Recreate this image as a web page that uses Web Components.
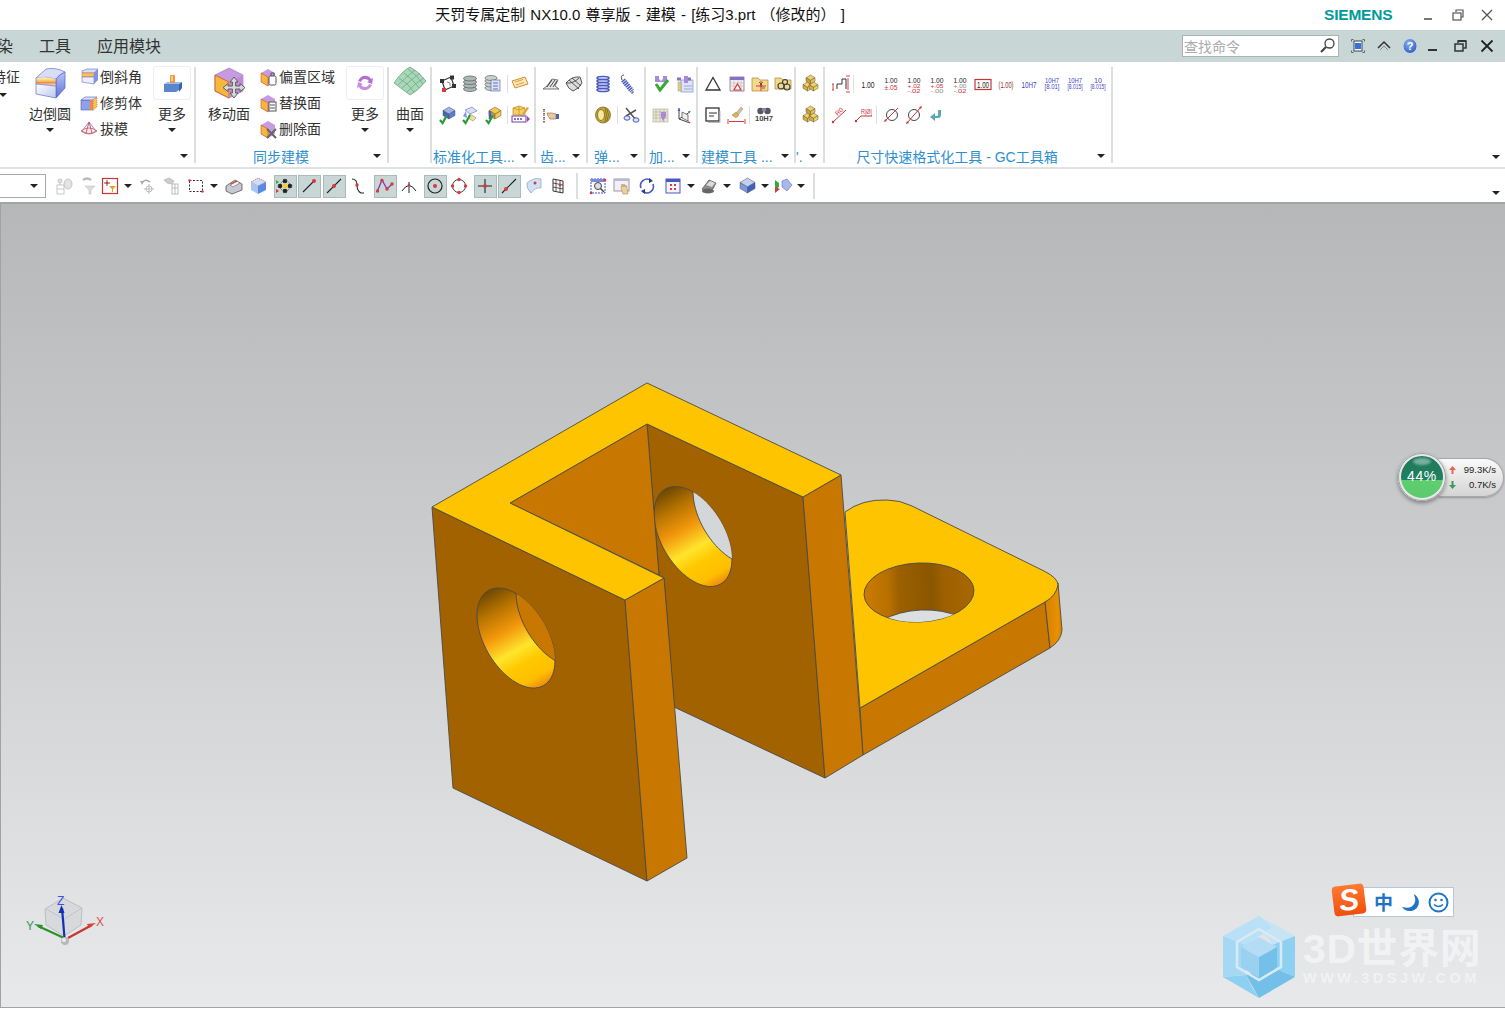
<!DOCTYPE html>
<html lang="zh">
<head>
<meta charset="utf-8">
<title>NX10.0</title>
<style>
  html,body{margin:0;padding:0;background:#fff;overflow:hidden}
  body{width:1505px;height:1010px;font-family:"Liberation Sans","Noto Sans CJK SC",sans-serif;color:#333}
</style>
</head>
<body>
<nx-titlebar>天罚专属定制 NX10.0 尊享版 - 建模 - [练习3.prt （修改的） ]</nx-titlebar>
<nx-menubar></nx-menubar>
<nx-ribbon>
  <nx-group w="196" label="" caret="184">
    <nx-clip-col></nx-clip-col>
    <nx-big icon="fillet" w="44" label="边倒圆" caret ml="8"></nx-big>
    <nx-list ml="8" w="64">
      <nx-small icon="chamfer">倒斜角</nx-small>
      <nx-small icon="trim">修剪体</nx-small>
      <nx-small icon="draft">拔模</nx-small>
    </nx-list>
    <nx-more icon="morebox" ml="9"></nx-more>
  </nx-group>
  <nx-group w="193" label="同步建模" center="85" caret="181">
    <nx-big icon="movef" w="44" label="移动面" ml="11"></nx-big>
    <nx-list ml="8" w="78">
      <nx-small icon="offs">偏置区域</nx-small>
      <nx-small icon="repl">替换面</nx-small>
      <nx-small icon="delf">删除面</nx-small>
    </nx-list>
    <nx-more icon="refresh" ml="9"></nx-more>
  </nx-group>
  <nx-group w="43" caret="">
    <nx-big icon="surf" w="36" label="曲面" caret ml="3"></nx-big>
  </nx-group>
  <nx-group w="104" label="标准化工具..." left="1" caret="92">
    <nx-icons start="432" r1="a_reg@447 a_stack@470 a_sheet@493 |@508 a_tag@521" r2="a_ok1@447 a_ok2@470 a_ok3@493 |@508 a_edit@521"></nx-icons>
  </nx-group>
  <nx-group w="52" label="齿..." left="4" caret="40">
    <nx-icons start="536" r1="b_gear1@551 b_gear2@574" r2="b_hand@551"></nx-icons>
  </nx-group>
  <nx-group w="58" label="弹..." left="6" caret="46">
    <nx-icons start="588" r1="c_spr@603 c_spr2@627" r2="c_coil@603 |@618 c_scis@632"></nx-icons>
  </nx-group>
  <nx-group w="52" label="加..." left="3" caret="40">
    <nx-icons start="646" r1="d_chk@661 d_grid@684" r2="d_tbl@661 d_axis@684"></nx-icons>
  </nx-group>
  <nx-group w="98" label="建模工具 ..." left="3" caret="87">
    <nx-icons start="698" r1="e_tri@713 e_cal@737 e_fold@760 e_fold2@783" r2="e_note@713 e_brush@737 |@750 e_fit@765"></nx-icons>
  </nx-group>
  <nx-group w="29" label="'." left="0" caret="17">
    <nx-icons start="796" r1="f_box@810" r2="f_box@810"></nx-icons>
  </nx-group>
  <nx-group w="288" label="尺寸快速格式化工具 - GC工具箱" center="132" caret="276">
    <nx-icons start="825" r1="g_step@841 |@854 g_d1@869 g_d2@892 g_d3@915 g_d4@938 g_d5@961 g_d6@984 g_d7@1007 g_h1@1030 g_h2@1053 g_h3@1076 g_h4@1099" r2="g_a@840 g_b@864 |@877 g_c@893 g_e@915 g_back@938"></nx-icons>
  </nx-group>
</nx-ribbon>
<nx-toolbar></nx-toolbar>
<nx-viewport>
  <nx-speed></nx-speed>
  <nx-watermark></nx-watermark>
  <nx-ime></nx-ime>
</nx-viewport>

<script>
// ---- small helpers
const FONT = '"Liberation Sans","Noto Sans CJK SC",sans-serif';
const caretCss = (c = "#222") => `width:0;height:0;border-left:4px solid transparent;border-right:4px solid transparent;border-top:4px solid ${c}`;
const cube = (x, y, s, top, left, right) => `<path d="M${x} ${y+s*.3}L${x+s*.5} ${y}L${x+s} ${y+s*.3}L${x+s*.5} ${y+s*.6}Z" fill="${top}" stroke="#555" stroke-width=".5"/><path d="M${x} ${y+s*.3}L${x+s*.5} ${y+s*.6}V${y+s}L${x} ${y+s*.7}Z" fill="${left}" stroke="#555" stroke-width=".5"/><path d="M${x+s} ${y+s*.3}L${x+s*.5} ${y+s*.6}V${y+s}L${x+s} ${y+s*.7}Z" fill="${right}" stroke="#555" stroke-width=".5"/>`;
const check = (x, y) => `<path d="M${x} ${y}l2.6 3L${x+7} ${y-5}" fill="none" stroke="#2c9a38" stroke-width="2.2"/>`;
const dim = (lines, col = "#222") => lines.map(([t, y, len, s, c]) => `<text x="10" y="${y}" text-anchor="middle" font-family="Liberation Sans" font-size="${s || 8}" textLength="${len}" lengthAdjust="spacingAndGlyphs" fill="${c || col}">${t}</text>`).join("");
const RED = "#c8333a", BLU = "#3f3fc8";

const ICONS = {
  // big buttons (32 box)
  fillet: `<defs><linearGradient id="f1" x1="0" y1="0" x2="0" y2="1"><stop offset="0" stop-color="#fff6c8"/><stop offset=".45" stop-color="#f5c35a"/><stop offset=".62" stop-color="#f08a4a"/><stop offset="1" stop-color="#fbf4dc"/></linearGradient><linearGradient id="f2" x1="0" y1="0" x2="1" y2="1"><stop offset="0" stop-color="#fff"/><stop offset="1" stop-color="#bcc8ea"/></linearGradient><linearGradient id="f3" x1="0" y1="0" x2="0" y2="1"><stop offset="0" stop-color="#b8c4f4"/><stop offset="1" stop-color="#5f70dc"/></linearGradient></defs><path d="M22 12Q26 7 31 5V21L22 31Z" fill="url(#f3)" stroke="#5060b8" stroke-width=".7"/><path d="M2 11L12 2Q22 0 31 5Q25 7 22 12Q12 9 2 11Z" fill="#d8def8" stroke="#6070c8" stroke-width=".7"/><path d="M2 11Q12 9 22 12V19L2 17Z" fill="url(#f1)"/><path d="M2 17L22 19V31L2 27Z" fill="url(#f2)" stroke="#6070c8" stroke-width=".7"/><path d="M2 11V17M22 12V19" stroke="#6070c8" stroke-width=".7"/>`,
  movef: `<path d="M16 1L30 8V24L16 31L2 24V8Z" fill="#c79be0" stroke="#8f6fb0" stroke-width=".6"/><path d="M2 8L16 15V31L2 24Z" fill="#f5b73c" stroke="#c9502c" stroke-width=".8"/><path d="M16 15L30 8V24L16 31Z" fill="#c08ad8"/><path d="M21 9l4 5h-2.4v4H27v-2.4l5 4-5 4V21h-4.400v4H25l-4 5-4-5h2.400V21H15v2.600l-5-4 5-4V18h4.400v-4H17Z" transform="translate(0 1)" fill="#d8d8d8" stroke="#555" stroke-width=".9"/>`,
  surf: `<path d="M2 18Q10 6 18 2Q26 6 34 16Q26 26 18 30Q10 24 2 18Z" fill="#a9d8b8" stroke="#5c9a78" stroke-width=".7"/><path d="M7 13Q16 18 22 27M12 8Q21 14 27 23M16 4Q25 10 31 19M6 20Q14 12 23 5M10 23Q19 15 28 8M15 27Q23 18 32 13" fill="none" stroke="#5c9a78" stroke-width=".6"/>`,
  morebox: `<path d="M3 12h15v6l-3 2H3Z" fill="#5b86cc"/><path d="M3 12l3-2h15l-3 2Z" fill="#9cc0ee"/><path d="M18 12l3-2v6l-3 4Z" fill="#3c64a8"/><rect x="9" y="3" width="5" height="8" rx="1" fill="#f5963a"/><rect x="10" y="4" width="2" height="5" fill="#ffd28a"/>`,
  refresh: `<path d="M4 9Q7 3 13 4Q16 4.500 17 7l2-1-1 6-5-2 2-1Q13 6.500 10 7Q7.500 7.500 7 10Z" fill="#b36fd0"/><path d="M18 13Q15 19 9 18Q6 17.500 5 15l-2 1 1-6 5 2-2 1Q9 15.500 12 15Q14.500 14.500 15 12Z" fill="#c98ce0"/>`,
  // small with label
  chamfer: `<path d="M2 3L7 1H18L14 5H2Z" fill="#d8def8" stroke="#6070c8" stroke-width=".6"/><path d="M2 5H14V9H2Z" fill="#f5c35a" stroke="#e07a40" stroke-width=".6"/><path d="M2 9H14V16L2 14Z" fill="#eef" stroke="#6070c8" stroke-width=".6"/><path d="M14 5L18 1V12L14 16Z" fill="#7f92e4"/>`,
  trim: `<rect x="1" y="6" width="12" height="10" fill="#8fa2e8" stroke="#5060b8" stroke-width=".6"/><path d="M1 6L5 3H17L13 6Z" fill="#d8def8" stroke="#5060b8" stroke-width=".6"/><path d="M10 6H13V16H10Z" fill="#f08a4a"/><path d="M13 6L17 3V13L13 16Z" fill="#f5c35a" stroke="#c9502c" stroke-width=".5" stroke-dasharray="1 1"/>`,
  draft: `<path d="M9 2L2 11Q9 16 16 11Z" fill="#f3f0fa" stroke="#6070c8" stroke-width=".7"/><path d="M9 2L6 13M9 2L12 13" stroke="#d83a3a" stroke-width=".8" fill="none"/><path d="M1 11Q9 5 17 11Q9 17 1 11Z" fill="none" stroke="#d8504a" stroke-width=".8"/>`,
  offs: `<path d="M9 1L16 5V14L9 18L2 14V5Z" fill="#c79be0"/><path d="M2 5L9 9V18L2 14Z" fill="#f5b73c" stroke="#c9502c" stroke-width=".6"/><rect x="10" y="8" width="7" height="9" rx="1.500" fill="#fff" stroke="#555"/><path d="M12 8V5h3v3" fill="none" stroke="#555"/>`,
  repl: `<path d="M9 1L16 5V14L9 18L2 14V5Z" fill="#c79be0"/><path d="M2 5L9 9V18L2 14Z" fill="#f5b73c" stroke="#c9502c" stroke-width=".6"/><rect x="10" y="8" width="7" height="9" fill="#fff" stroke="#555"/><path d="M11 11h5M11 14h5" stroke="#555"/>`,
  delf: `<path d="M9 1L16 5V14L9 18L2 14V5Z" fill="#c79be0"/><path d="M2 5L9 9V18L2 14Z" fill="#f5b73c" stroke="#c9502c" stroke-width=".6"/><path d="M8 9L17 18M17 9L8 18" stroke="#666" stroke-width="2"/>`,
  // group 4
  a_reg: `<path d="M5 7L14 3L17 12L8 16Z" fill="#fff" stroke="#333" stroke-width="1.200"/><g fill="#333"><rect x="3" y="5" width="4" height="4"/><rect x="13" y="1.500" width="4" height="4"/><rect x="15" y="10" width="4" height="4"/></g><rect x="5" y="14" width="4" height="4" fill="#d83a3a"/><path d="M10 8l3 1v3" fill="none" stroke="#888"/>`,
  a_stack: `<g fill="#aab8b0" stroke="#556" stroke-width=".7"><ellipse cx="10" cy="15" rx="6.500" ry="2.500"/><ellipse cx="10" cy="11.500" rx="6.500" ry="2.500"/><ellipse cx="10" cy="8" rx="6.500" ry="2.500"/><ellipse cx="10" cy="4.500" rx="6.500" ry="2.500"/></g>`,
  a_sheet: `<g fill="#c8d0c8" stroke="#667" stroke-width=".7"><ellipse cx="8" cy="14" rx="6" ry="2.500"/><ellipse cx="8" cy="10.500" rx="6" ry="2.500"/><ellipse cx="8" cy="7" rx="6" ry="2.500"/><ellipse cx="8" cy="4" rx="6" ry="2.500"/></g><rect x="8" y="6" width="9" height="11" fill="#dde4f8" stroke="#6070b0" stroke-width=".7"/><path d="M10 9h5M10 12h5M10 15h5" stroke="#6070b0"/>`,
  a_tag: `<path d="M2 7L15 3L18 10L5 14Z" fill="#fce8b0" stroke="#d88a30"/><path d="M5 8l8-2.500M6 11l8-2.500" stroke="#d88a30" stroke-width=".8"/>`,
  a_ok1: cube(6, 2, 12, "#9fb4ee", "#3f62c8", "#5b7de0") + check(3, 15),
  a_ok2: `<path d="M5 5l7-3 5 4-7 3Z" fill="#d8def8" stroke="#6070b8" stroke-width=".6"/><path d="M10 9l6 4-3 3-5-3Z" fill="#f0e090" stroke="#888" stroke-width=".6"/><path d="M6 6l-3 5 4 2Z" fill="#8898e0"/>` + check(3, 15),
  a_ok3: cube(6, 2, 12, "#f5c84a", "#e0a020", "#f5c84a") + `<path d="M7 6v8" stroke="#3f62c8" stroke-width="2.500"/>` + check(3, 15),
  a_edit: `<path d="M3 3l6-2 6 2v7H3Z" fill="#f5d060" stroke="#b88a20" stroke-width=".7"/><path d="M9 1v9M3 3l6 2 6-2" stroke="#b88a20" stroke-width=".6" fill="none"/><rect x="2" y="11" width="14" height="6" fill="#fff" stroke="#6a3fa8"/><path d="M4 14h2M7 14h2M10 14h2" stroke="#6a3fa8" stroke-width="1.500"/><path d="M17 11l3 3-3 3Z" fill="#a83fc8"/><path d="M12 9l5-7 2 1-5 7Z" fill="#e8a040"/>`,
  // group 5
  b_gear1: `<path d="M2 15l4-3 5-7 6 1-3 6 4 3Z" fill="#e8e8e8" stroke="#555" stroke-width=".8"/><path d="M6 13l5-7M9 13l5-7M12 13l4-6" stroke="#333" stroke-width=".9"/>`,
  b_gear2: `<path d="M2 9Q8 2 16 3L18 9Q15 15 9 17Q4 15 2 9Z" fill="#ddd" stroke="#333" stroke-width=".8"/><path d="M5 6l10 9M8 4l9 8M2 9q7 1 13-5" fill="none" stroke="#333" stroke-width=".8"/>`,
  b_hand: `<path d="M2 5h2M2 9h2M2 13h2M2 17h2" stroke="#c8333a" stroke-width="1.200"/><path d="M3 4v14" stroke="#333" stroke-dasharray="1 1"/><path d="M6 8h5l4 1v5H9l-2-3Z" fill="#e8c8a0" stroke="#8a6a40" stroke-width=".6"/><rect x="15" y="9" width="3" height="5" fill="#5060b8"/>`,
  // group 6
  c_spr: `<g fill="none" stroke="#4a58c0" stroke-width="1.700"><ellipse cx="10" cy="4" rx="6" ry="1.500"/><ellipse cx="10" cy="7" rx="6" ry="1.500"/><ellipse cx="10" cy="10" rx="6" ry="1.500"/><ellipse cx="10" cy="13" rx="6" ry="1.500"/><ellipse cx="10" cy="16" rx="6" ry="1.500"/></g>`,
  c_spr2: `<path d="M6 6L15 17" stroke="#4a58c0" stroke-width="5" stroke-dasharray="1.500 .7"/><path d="M5 6Q3 1 7 1M16 17Q17 20 14 19" fill="none" stroke="#555"/>`,
  c_coil: `<ellipse cx="10" cy="10" rx="7.500" ry="8" fill="#c8a830" stroke="#6a5a20" stroke-width=".7"/><ellipse cx="8" cy="10" rx="3.500" ry="5.500" fill="#f5e8a0" stroke="#6a5a20" stroke-width=".7"/><path d="M12 3Q15 10 12 17M14 4Q17 10 14 16" fill="none" stroke="#6a5a20" stroke-width=".7"/>`,
  c_scis: `<path d="M5 3L15 15M15 5L5 11" stroke="#555" stroke-width="1.500"/><ellipse cx="15" cy="15" rx="3" ry="2.200" fill="#dde4f8" stroke="#4a58c0"/><ellipse cx="6" cy="13" rx="3" ry="2.200" fill="#dde4f8" stroke="#4a58c0"/>`,
  // group 7
  d_chk: `<path d="M4 2h4v3l2 2 2-2V2h4v6h-12Z" fill="#a88ad8"/><path d="M5 10l4 6 8-10" fill="none" stroke="#36a838" stroke-width="3"/>`,
  d_grid: `<rect x="7" y="6" width="12" height="12" fill="#dde4f8" stroke="#8090c8" stroke-width=".7"/><path d="M3 5h4M13 5h4" stroke="#8a6fc8" stroke-width="3"/><rect x="4" y="8" width="3" height="9" fill="#e8d070" stroke="#998" stroke-width=".5"/><path d="M10 2v7h4V2" fill="#a88ad8"/><path d="M10 12h8M10 15h8" stroke="#8090c8" stroke-width=".7"/>`,
  d_tbl: `<rect x="2" y="4" width="15" height="13" fill="#f0e8c8" stroke="#aaa" stroke-width=".6"/><path d="M2 7h15M2 10h15M2 13h15M5 4v13M9 4v13M13 4v13" stroke="#aaa" stroke-width=".6"/><path d="M10 7h5v5l-2 2-1 3-1-3-1-2Z" fill="#a88ad8"/>`,
  d_axis: `<path d="M5 3v11l11 4M5 14l11-7" fill="none" stroke="#444"/><path d="M8 7l6 3v6l-6-3Z" fill="#eee" stroke="#444" stroke-width=".7"/><path d="M5 3l-1.500 3h3Z" fill="#3f62c8"/><path d="M17 6l-3 0 1 2Z" fill="#36a838"/><path d="M17 18l-3-2 0 2Z" fill="#d83a3a"/>`,
  // group 8
  e_tri: `<path d="M10 3.500L17 16H3Z" fill="#fff" stroke="#333" stroke-width="1.300"/>`,
  e_cal: `<rect x="3" y="3" width="14" height="14" fill="#f4eef4" stroke="#666" stroke-width=".7"/><rect x="3" y="3" width="14" height="3" fill="#8a6fc8"/><path d="M3 9h14M3 12h14M7 6v11M11 6v11M14 6v11" stroke="#bbb" stroke-width=".6"/><path d="M10.500 10l3.500 6H7Z" fill="#fff" stroke="#d83a3a" stroke-width="1.200"/>`,
  e_fold: `<path d="M2 4h6l2 2h8v11H2Z" fill="#f2d98c" stroke="#a8883a" stroke-width=".7"/><path d="M11 7v10M6 12h10" stroke="#d83a3a" stroke-width="1"/><path d="M9 8l3 3M13 8l-3 3M15 14h-3" stroke="#333" stroke-width=".7"/><circle cx="11" cy="12" r="1.300" fill="#d83a3a"/>`,
  e_fold2: `<path d="M2 4h6l2 2h8v9H2Z" fill="#f2d98c" stroke="#a8883a" stroke-width=".7"/><circle cx="8" cy="12" r="3" fill="none" stroke="#444" stroke-width="1.200"/><circle cx="14" cy="13" r="3" fill="none" stroke="#444" stroke-width="1.200"/><circle cx="12" cy="8" r="2.500" fill="none" stroke="#444" stroke-width="1.200"/>`,
  e_note: `<rect x="3" y="3" width="13" height="13" fill="#fff" stroke="#333" stroke-width="1.300"/><path d="M6 8h8M6 11h5" stroke="#333"/><path d="M5 17.500h12V6" fill="none" stroke="#bbb"/>`,
  e_brush: `<path d="M9 8l5-6 2 2-5 6Z" fill="#d8c090" stroke="#888" stroke-width=".5"/><path d="M5 10l4-3 3 3-3 3Z" fill="#e0b050" stroke="#888" stroke-width=".5"/><path d="M1 14v5M18 14v5M2 16.500h15" stroke="#d83a3a"/>`,
  e_fit: `<circle cx="6.500" cy="6" r="3.200" fill="#556" /><circle cx="13.500" cy="6" r="3.200" fill="#556"/><rect x="8" y="3" width="4" height="3" fill="#889"/><text x="10" y="16" text-anchor="middle" font-family="Liberation Sans" font-weight="700" font-size="7.500" fill="#444">10H7</text>`,
  f_box: cube(3, 8, 9, "#f5d060", "#e0b030", "#f5d060") + cube(9, 8, 9, "#f5d060", "#e0b030", "#f5d060") + cube(6, 1, 9, "#f5d060", "#d0a030", "#e8c050"),
  // group 10
  g_step: `<path d="M6 15V10h5V5h4v10" fill="none" stroke="#333"/><path d="M2 10v6M17 4v12M15 2h4M15 18h4M1 10h2M1 16h2" stroke="${RED}" stroke-width=".9" fill="none"/>`,
  g_d1: dim([["1.00", 13.500, 13, 9]]),
  g_d2: dim([["1.00", 9, 13], ["±.05", 15.500, 13, 6.500, RED]]),
  g_d3: dim([["1.00", 9, 13], ["+.02", 14, 13, 6, RED], ["-.02", 18.500, 13, 6, RED]]),
  g_d4: dim([["1.00", 9, 13], ["+.05", 14, 13, 6, RED], ["-.00", 18.500, 13, 6, "#888"]]),
  g_d5: dim([["1.00", 9, 13], ["+.00", 14, 13, 6, "#888"], ["-.02", 18.500, 13, 6, RED]]),
  g_d6: `<rect x="2" y="5.500" width="16" height="10" fill="none" stroke="${RED}" stroke-width="1.200"/>` + dim([["1.00", 13.500, 12, 9]]),
  g_d7: dim([["(1.00)", 13.500, 15, 8.500, "#903030"]]),
  g_h1: dim([["10H7", 13.500, 15, 8.500, BLU]]),
  g_h2: dim([["10H7", 8.500, 14, 8, BLU], ["[8.01]", 15, 15, 7, BLU]]),
  g_h3: dim([["10H7", 8.500, 14, 8, BLU], ["[8.015]", 15, 15, 7, BLU]]),
  g_h4: dim([["10", 8.500, 8, 8, BLU], ["[8.015]", 15, 15, 7, BLU]]),
  g_a: `<path d="M3 17L16 5" stroke="${RED}"/><circle cx="3" cy="17" r="1.200" fill="${RED}"/><text x="8" y="10" font-family="Liberation Sans" font-size="6.500" fill="${RED}" transform="rotate(-42 9 11)">R0</text>`,
  g_b: `<path d="M2 16L7 11H18" fill="none" stroke="${RED}"/><circle cx="2" cy="16" r="1.200" fill="${RED}"/>` + `<text x="7" y="9" font-family="Liberation Sans" font-size="6.500" textLength="11" lengthAdjust="spacingAndGlyphs" fill="${RED}">R|Ø|</text>`,
  g_c: `<circle cx="10" cy="10" r="5.500" fill="none" stroke="#444" stroke-width="1"/><path d="M3 16L16 3" stroke="${RED}"/><path d="M2 17l3-1-2-2Z" fill="${RED}"/>`,
  g_e: `<circle cx="10" cy="10" r="5.500" fill="none" stroke="#444" stroke-width="1"/><path d="M3 18L17 2" stroke="${RED}"/><path d="M2 19l3-1-2-2Z" fill="${RED}"/><path d="M18 1l-1 3-2-2Z" fill="${RED}"/>`,
  g_back: `<path d="M14 5v5q0 3-3 3H8v3L3 12l5-4v3h2q1 0 1-1V5Z" fill="#5aa8b0"/>`,
  // toolbar
  t_part: `<g stroke="#bbb" fill="#e4e4e4" stroke-width=".8"><rect x="3" y="9" width="7" height="9" fill="none"/><path d="M3 13h7M6 9V5"/><ellipse cx="14" cy="8" rx="4" ry="5"/><circle cx="6" cy="5" r="2"/></g>`,
  t_sel: `<path d="M5 4q4-3 8 0" stroke="#bbb" stroke-width="2.500" fill="none"/><path d="M7 10h10l-4 4v4h-2v-4Z" fill="#ddd" stroke="#bbb" stroke-width=".5"/>`,
  t_filt: `<rect x="2.500" y="2.500" width="15" height="15" fill="#fff" stroke="#c8333a" stroke-width="1.200"/><path d="M7 4v6M4 7h6" stroke="#333" stroke-width=".8"/><circle cx="7" cy="7" r="1.300" fill="#d83a3a"/><path d="M9 10h7l-3 3v3h-1v-3Z" fill="#e8a020"/>`,
  t_rot: `<path d="M5 7q3-5 8-1" fill="none" stroke="#aaa" stroke-width="1.500"/><path d="M3 5l4 0-2 4Z" fill="#aaa"/><circle cx="12" cy="13" r="3" fill="none" stroke="#bbb"/><path d="M12 8v10M7 13h10" stroke="#bbb"/>`,
  t_ass: `<path d="M3 4l5-2 5 3-2 3-5-1Z" fill="#ccc" stroke="#aaa" stroke-width=".6"/><rect x="11" y="8" width="6" height="10" fill="none" stroke="#bbb"/><path d="M11 12h6M14 8v10" stroke="#bbb"/>`,
  t_rect: `<rect x="3.500" y="4.500" width="13" height="11" fill="none" stroke="#333" stroke-dasharray="2 1.500"/><circle cx="3.500" cy="4.500" r="1.200" fill="#d83a3a"/><circle cx="16.500" cy="15.500" r="1.200" fill="#d83a3a"/>`,
  t_shade: `<path d="M2 10L11 4L18 8V14L8 18L2 15Z" fill="#c8c8d0" stroke="#555" stroke-width=".8"/><path d="M6 9l7-4 3 2-7 4Z" fill="#f0f0f0" stroke="#555" stroke-width=".5"/><path d="M7 8l6-3" stroke="#d83a3a" stroke-width="1.200"/>`,
  t_cube: `<path d="M3 6L10 2L18 6L10 10Z" fill="#c8e0f8" stroke="#d85050" stroke-width=".7" stroke-dasharray="1.500 .8"/><path d="M3 6L10 10V18L3 14Z" fill="#a8c4f0"/><path d="M18 6L10 10V18L18 14Z" fill="#5a8ae0"/>`,
  t_pts: `<g fill="#222"><circle cx="5" cy="10" r="2.300"/><circle cx="15" cy="10" r="2.300"/><circle cx="10" cy="5" r="2.300"/><circle cx="10" cy="15" r="2.300"/></g><path d="M10 3L17 10L10 17L3 10Z" fill="none" stroke="#555" stroke-dasharray="1 1"/><circle cx="10" cy="10" r="2.500" fill="#f5d020"/><path d="M1 4l3 2-3 2Z" fill="#36a838"/><path d="M1 13l3 2-3 2Z" fill="#d83a3a"/>`,
  t_end: `<path d="M4 16L15 5" stroke="#222" stroke-width="1.100"/><circle cx="15" cy="5" r="2" fill="#d83a3a"/>`,
  t_mid: `<path d="M3 17L17 3" stroke="#222" stroke-width="1.100"/><circle cx="10" cy="10" r="2" fill="#d83a3a"/>`,
  t_curve: `<path d="M4 3q5 0 5 6t4 8h3" fill="none" stroke="#222" stroke-width="1.100"/><circle cx="9" cy="9" r="1.700" fill="#d83a3a"/>`,
  t_poly: `<path d="M2 16L7 4L12 13L17 8" fill="none" stroke="#8a2fb8" stroke-width="1.300"/><g fill="#d83a3a"><circle cx="2.500" cy="15" r="1.700"/><circle cx="7" cy="4.500" r="1.700"/><circle cx="12" cy="13" r="1.700"/><circle cx="17" cy="8" r="1.700"/></g>`,
  t_arc: `<path d="M3 15q7-11 14 0M10 6v11" fill="none" stroke="#222" stroke-width="1"/><circle cx="10" cy="9" r="1.300" fill="#d83a3a"/>`,
  t_ctr: `<circle cx="10" cy="10" r="7" fill="none" stroke="#222" stroke-width="1.200"/><circle cx="10" cy="10" r="2" fill="#d83a3a"/>`,
  t_circ: `<circle cx="10" cy="10" r="6.500" fill="none" stroke="#333"/><g fill="#d83a3a"><circle cx="10" cy="3.500" r="1.700"/><circle cx="10" cy="16.500" r="1.700"/><circle cx="3.500" cy="10" r="1.700"/><circle cx="16.500" cy="10" r="1.700"/></g>`,
  t_cross: `<path d="M3 10h14M10 3v14" stroke="#222" stroke-width="1.100"/><circle cx="10" cy="10" r="1.900" fill="#d83a3a"/>`,
  t_line: `<path d="M3 17L17 3" stroke="#222" stroke-width="1.100"/><circle cx="7" cy="13" r="2" fill="#d83a3a"/>`,
  t_surf: `<path d="M3 7Q10 1 17 3V12Q11 11 7 17Q2 12 3 7Z" fill="#cfe2f5" stroke="#9ab" stroke-width=".8"/><circle cx="11" cy="7" r="1.500" fill="#d83a3a"/>`,
  t_mesh: `<path d="M5 3L15 5V17L5 15Z" fill="#fff" stroke="#333"/><path d="M5 7l10 2M5 11l10 2M8 3.500v12M12 4.500v12" stroke="#333" stroke-width=".8"/><circle cx="12" cy="9" r="1.400" fill="#d83a3a"/>`,
  t_fit: `<rect x="3" y="3" width="14" height="14" fill="#fff" stroke="#3f4fb8" stroke-dasharray="2 1"/><rect x="3" y="3" width="14" height="3" fill="#7a8ad8"/><circle cx="10" cy="10" r="3.500" fill="#dde" stroke="#444"/><path d="M12.500 12.500L16 16" stroke="#444" stroke-width="1.500"/><circle cx="3" cy="17" r="1.300" fill="#d83a3a"/><circle cx="17" cy="4" r="1.300" fill="#d83a3a"/>`,
  t_pan: `<rect x="2" y="3" width="15" height="12" fill="#f0f0f8" stroke="#999"/><rect x="2" y="3" width="15" height="2" fill="#b8b8d8"/><path d="M9 12l1-4 1 3 1-3 1 3 1-2 1 3 1 6h-5Z" fill="#f0d0a0" stroke="#a07840" stroke-width=".5"/>`,
  t_rotv: `<path d="M4 12A6.500 6.500 0 0 1 14 4.500" fill="none" stroke="#4a58c0" stroke-width="1.600"/><path d="M16 8A6.500 6.500 0 0 1 6 15.500" fill="none" stroke="#4a58c0" stroke-width="1.600"/><path d="M12 2l4 3-4 2Z" fill="#2c3890"/><path d="M8 18l-4-3 4-2Z" fill="#2c3890"/>`,
  t_view: `<rect x="3" y="3" width="14" height="14" fill="#f4f4fc" stroke="#4a58c0"/><rect x="3" y="3" width="14" height="3" fill="#4a58c0"/><path d="M7 8h2v2H7ZM11 8h2v2h-2ZM7 12h2v2H7ZM11 12h2v2h-2Z" fill="#d83a3a"/>`,
  t_render: `<path d="M2 13l7-9 7 3-3 6-6 3Z" fill="#8a8f8f" stroke="#555" stroke-width=".7"/><path d="M6 9l4-4 5 2-3 4Z" fill="#d8dcdc"/><ellipse cx="8" cy="15" rx="6" ry="2.500" fill="#666"/>`,
  t_cube2: cube(3, 2, 15, "#c0d0f0", "#7a9ae0", "#3f62c0"),
  t_diam: `<path d="M9 5l5-2 5 6-5 6-5-4Z" fill="#a8b8e8" stroke="#6070b8" stroke-width=".6"/><path d="M2 4l4 3v4l-4 3Z" fill="#36a838"/><path d="M2 11l5 2-5 4Z" fill="#d83a3a"/>`,
  // title and menu
  find: `<circle cx="11.500" cy="7.500" r="4.500" fill="#fff" stroke="#444" stroke-width="1.300"/><path d="M8 11L3 16" stroke="#444" stroke-width="2.200"/>`,
  frame: `<path d="M3.500 5.500V3.500h2M14.500 3.500h2v2M16.500 14.500v2h-2M5.500 16.500h-2v-2" fill="none" stroke="#666"/><rect x="6" y="5" width="8" height="10" fill="#fff" stroke="#345"/><rect x="7" y="7" width="6" height="6" fill="#3c6fd8"/>`,
  chev: `<path d="M4 12l6-6 6 6" fill="none" stroke="#333" stroke-width="1.500"/><path d="M6 14l4-4 4 4" fill="none" stroke="#888"/>`,
  help: `<defs><radialGradient id="h1" cx=".4" cy=".3" r=".8"><stop offset="0" stop-color="#8ab0f0"/><stop offset="1" stop-color="#2a56c8"/></radialGradient></defs><ellipse cx="10" cy="10" rx="6.500" ry="7" fill="url(#h1)"/><text x="10" y="14" text-anchor="middle" font-family="Liberation Sans" font-weight="700" font-size="11" fill="#fff">?</text>`,
  min: `<path d="M5 14h9" stroke="#333" stroke-width="2"/>`,
  max: `<rect x="5" y="8" width="8" height="7" fill="none" stroke="#333" stroke-width="1.500"/><path d="M8 7V5h8v7h-2.500" fill="none" stroke="#333" stroke-width="1.500"/><path d="M8 5h8" stroke="#333" stroke-width="2"/>`,
  close: `<path d="M4.500 4.500L15.500 15.500M15.500 4.500L4.500 15.500" stroke="#222" stroke-width="1.800"/>`,
  minL: `<path d="M5 14h8" stroke="#555" stroke-width="1.600"/>`,
  maxL: `<rect x="5" y="8" width="8" height="7" fill="none" stroke="#555" stroke-width="1.200"/><path d="M8 7V5h7v7h-2" fill="none" stroke="#555" stroke-width="1.200"/>`,
  closeL: `<path d="M5 5L15 15M15 5L5 15" stroke="#555" stroke-width="1.300"/>`
};

const svgIcon = (name, size = 20, box = 20) => `<svg width="${size}" height="${size}" viewBox="0 0 ${box} ${box}" style="display:block;flex:none;overflow:visible">${ICONS[name] || ""}</svg>`;

class NxEl extends HTMLElement {
  constructor() { super(); this.attachShadow({ mode: "open" }); }
  connectedCallback() { this.shadowRoot.innerHTML = this.html(); }
}

class NxTitlebar extends NxEl {
  html() {
    return `<style>
      :host{display:flex;align-items:center;height:30px;background:#fff;font:15px/30px ${FONT};color:#111}
      .t{width:1280px;text-align:center;white-space:pre;word-spacing:1px;margin-right:44px;flex:none}
      .logo{font:700 15.500px/30px "Liberation Sans",sans-serif;color:#009a9a;letter-spacing:-.2px;width:70px;flex:none}
      .b{display:flex;margin-left:25px;gap:9px}
    </style><div class="t"><slot></slot></div><div class="logo">SIEMENS</div><div class="b">${svgIcon("minL")}${svgIcon("maxL")}${svgIcon("closeL")}</div>`;
  }
}

class NxMenubar extends NxEl {
  html() {
    return `<style>
      :host{display:flex;align-items:center;height:32px;background:#c8d7d5;font:16px/32px ${FONT};color:#333;overflow:hidden}
      .m{flex:none;white-space:nowrap;margin-top:2px}
      .find{flex:none;margin-left:1021px;box-sizing:border-box;width:157px;height:22px;background:#fff;border:1px solid #a9b3b2;display:flex;align-items:center;justify-content:space-between;font-size:14px;line-height:20px;color:#aaa;padding-left:1px}
      .find span{margin-top:2px}
      .ic{display:flex;margin-left:9px;gap:6px;align-items:center;flex:none}
    </style>
    <span class="m" style="margin-left:-3px">染</span><span class="m" style="margin-left:26px">工具</span><span class="m" style="margin-left:26px">应用模块</span>
    <div class="find"><span>查找命令</span>${svgIcon("find", 20)}</div>
    <div class="ic">${svgIcon("frame")}${svgIcon("chev")}${svgIcon("help")}<span style="margin-left:-3px;display:flex">${svgIcon("min")}</span><span style="margin-left:1px;display:flex">${svgIcon("max")}</span><span style="margin-left:1px;display:flex">${svgIcon("close")}</span></div>`;
  }
}

class NxRibbon extends NxEl {
  html() {
    return `<style>
      :host{display:flex;height:105px;background:#fff;border-bottom:2px solid #dfe3e3;box-sizing:content-box;position:relative;font:14px/20px ${FONT};color:#333}
      .c{position:absolute;left:1492px;top:93px;${caretCss()}}
    </style><slot></slot><i class="c"></i>`;
  }
}

class NxGroup extends NxEl {
  html() {
    const w = this.getAttribute("w"), label = this.getAttribute("label") || "", left = this.getAttribute("left"), center = this.getAttribute("center"), caret = this.getAttribute("caret");
    const pad = center ? `margin-left:${center - 120}px;width:240px;text-align:center` : `margin-left:${left || 0}px`;
    return `<style>
      :host{display:flex;flex-direction:column;flex:none;box-sizing:border-box;width:${w}px;height:105px;background:linear-gradient(#dcdfdf,#dcdfdf) right 5px/2px 96px no-repeat}
      .b{display:flex;height:86px;align-items:flex-start}
      .f{display:flex;height:18px;align-items:center;position:relative}
      .l{flex:none;font-size:14px;line-height:18px;color:#2f8fce;white-space:nowrap;${pad}}
      .c{position:absolute;left:${(caret || 0) - 4}px;top:6px;${caretCss()}}
    </style><div class="b"><slot></slot></div><div class="f"><span class="l">${label}</span>${caret ? '<i class="c"></i>' : ""}</div>`;
  }
}

class NxClipCol extends NxEl {
  html() {
    return `<style>
      :host{display:flex;flex-direction:column;flex:none;width:20px;margin-top:5px;overflow:hidden}
      span{margin-left:-8px;white-space:nowrap;height:26px;font-size:14px;line-height:20px}
      i{margin-left:-1px;${caretCss()}}
    </style><span>特征</span><i></i>`;
  }
}

class NxBig extends NxEl {
  html() {
    const w = this.getAttribute("w"), ml = this.getAttribute("ml") || 0, box = this.getAttribute("icon") === "surf" ? 36 : 32;
    return `<style>
      :host{display:flex;flex-direction:column;align-items:center;flex:none;width:${+w}px;margin:4px 0 0 ${ml}px}
      .i{height:34px;display:flex;align-items:center;justify-content:center}
      .l{height:20px;margin-top:4px;white-space:nowrap;font-size:14px;line-height:20px}
      i{margin-top:4px;${caretCss()}}
    </style><div class="i">${svgIcon(this.getAttribute("icon"), box, box)}</div><div class="l">${this.getAttribute("label")}</div>${this.hasAttribute("caret") ? "<i></i>" : ""}`;
  }
}

class NxList extends NxEl {
  html() {
    return `<style>:host{display:flex;flex-direction:column;flex:none;width:${this.getAttribute("w") || 67}px;margin:2px 0 0 ${this.getAttribute("ml") || 0}px}</style><slot></slot>`;
  }
}

class NxSmall extends NxEl {
  html() {
    return `<style>
      :host{display:flex;align-items:center;height:26px;white-space:nowrap;font-size:14px;gap:2px}
    </style>${svgIcon(this.getAttribute("icon"), 18, 18)}<slot></slot>`;
  }
}

class NxMore extends NxEl {
  html() {
    return `<style>
      :host{display:flex;flex-direction:column;align-items:center;flex:none;width:38px;margin:4px 0 0 ${this.getAttribute("ml") || 0}px}
      .b{box-sizing:border-box;width:38px;height:34px;border:1px solid #eee;border-radius:3px;display:flex;align-items:center;justify-content:center}
      .l{height:20px;margin-top:4px;font-size:14px;line-height:20px}
      i{margin-top:4px;${caretCss()}}
    </style><div class="b">${svgIcon(this.getAttribute("icon"), 22, 22)}</div><div class="l">更多</div><i></i>`;
  }
}

// rows of small icons: "name@centerX" items, placed in flow by margin from the previous item
class NxIcons extends NxEl {
  row(spec, start) {
    let cur = start, out = "";
    for (const it of (spec || "").split(/\s+/).filter(Boolean)) {
      const [n, cx] = it.split("@"); const x = +cx;
      if (n === "|") { out += `<b style="margin-left:${x - 1 - cur}px"></b>`; cur = x + 2; }
      else { out += `<span style="margin-left:${x - 10 - cur}px">${svgIcon(n)}</span>`; cur = x + 10; }
    }
    return `<div class="r">${out}</div>`;
  }
  html() {
    const s = +this.getAttribute("start");
    return `<style>
      :host{display:flex;flex-direction:column;margin-top:12px;gap:11px}
      .r{display:flex;align-items:center;height:20px}
      span{flex:none}
      b{flex:none;width:1px;height:18px;background:#dcdfdf;margin-right:1px}
    </style>${this.row(this.getAttribute("r1"), s)}${this.row(this.getAttribute("r2"), s)}`;
  }
}

const TOOLS = [["t_part",64],["t_sel",88],["t_filt",110],["^",128],["t_rot",147],["t_ass",171],["t_rect",196],["^",214],["t_shade",234],["t_cube",258],["t_pts",285,1],["t_end",309,1],["t_mid",334,1],["t_curve",358],["t_poly",385,1],["t_arc",409],["t_ctr",435,1],["t_circ",459],["t_cross",485,1],["t_line",509,1],["t_surf",534],["t_mesh",558],["|",577],["t_fit",598],["t_pan",622],["t_rotv",647],["t_view",673],["^",691],["t_render",710],["^",727],["t_cube2",747],["^",765],["t_diam",783],["^",801],["|",814]];

class NxToolbar extends NxEl {
  html() {
    let cur = 46, out = "";
    for (const [n, x, on] of TOOLS) {
      if (n === "^") { out += `<i class="c" style="margin-left:${x - 4 - cur}px"></i>`; cur = x + 4; }
      else if (n === "|") { out += `<b style="margin-left:${x - 1 - cur}px"></b>`; cur = x + 1; }
      else { out += `<span class="t${on ? " on" : ""}" style="margin-left:${x - 11.5 - cur}px">${svgIcon(n)}</span>`; cur = x + 11.5; }
    }
    return `<style>
      :host{display:flex;align-items:center;height:33px;background:#fff;border-bottom:2px solid #a0a6a6;position:relative}
      .combo{box-sizing:border-box;flex:none;width:46px;height:24px;margin-top:1px;background:#fff;border:1px solid #aaa;border-left:0;display:flex;align-items:center;justify-content:flex-end;padding-right:7px}
      .c{flex:none;${caretCss()}}
      .t{flex:none;box-sizing:border-box;width:23px;height:23px;margin-top:1px;display:flex;align-items:center;justify-content:center}
      .on{background:#c8d7d5;border:1px solid #a8bdb9}
      b{flex:none;width:2px;height:26px;background:#dcdfdf;margin-top:1px}
      .e{position:absolute;left:1492px;top:22px;${caretCss()}}
    </style><div class="combo"><i class="c"></i></div>${out}<i class="e"></i>`;
  }
}

// the hole of a wall: a circle drawn on the wall's plane, as a path in page coordinates
const holePath = (cx, cy) => {
  let d = "";
  for (let k = 0; k < 72; k++) {
    const a = k / 72 * Math.PI * 2, c = Math.cos(a), s = Math.sin(a);
    d += (k ? "L" : "M") + (cx + 38.8 * c + 3.46 * s).toFixed(2) + " " + (cy + 18.7 * c + 46.4 * s).toFixed(2);
  }
  return d + "Z";
};

class NxViewport extends NxEl {
  html() {
    const EDGE = 'stroke="#4a4a48" stroke-width=".9" stroke-linejoin="round"';
    const stops = `<stop offset="0" stop-color="#6e4800"/><stop offset=".2" stop-color="#b87400"/><stop offset=".4" stop-color="#f2970c"/><stop offset=".6" stop-color="#ffe42c"/><stop offset=".74" stop-color="#ffc800"/><stop offset=".9" stop-color="#ffbe00"/><stop offset="1" stop-color="#ee8a10"/>`;
    return `<style>
      :host{display:block;position:relative;box-sizing:border-box;height:804px;background:linear-gradient(#b5b7b9,#e8e9eb);border-left:1px solid #9ea4a4;border-bottom:1px solid #a0a4a4;overflow:hidden}
      svg{position:absolute;left:-1px;top:0}
      text{font-family:"Liberation Sans",sans-serif}
    </style>
    <svg width="1505" height="803" viewBox="0 204 1505 803">
      <defs>
        <linearGradient id="hA" gradientUnits="userSpaceOnUse" x1="489" y1="590" x2="543" y2="686">${stops}</linearGradient>
        <linearGradient id="hB" gradientUnits="userSpaceOnUse" x1="666" y1="489" x2="720" y2="584.500">${stops}</linearGradient>
        <linearGradient id="hC" gradientUnits="userSpaceOnUse" x1="864" y1="0" x2="974" y2="0">
          <stop offset="0" stop-color="#cc7c00"/><stop offset=".22" stop-color="#b87000"/><stop offset=".32" stop-color="#9c6000"/><stop offset=".62" stop-color="#8a5600"/><stop offset=".72" stop-color="#9c6000"/><stop offset="1" stop-color="#a86800"/>
        </linearGradient>
        <linearGradient id="rnd" gradientUnits="userSpaceOnUse" x1="1047" y1="0" x2="1062" y2="0"><stop offset="0" stop-color="#d88200"/><stop offset=".7" stop-color="#e89000"/><stop offset="1" stop-color="#d88400"/></linearGradient>
        <clipPath id="cA"><path d="${holePath(516, 638)}"/></clipPath>
        <clipPath id="cB"><path d="${holePath(693, 536.5)}"/></clipPath>
        <clipPath id="cC"><ellipse cx="919" cy="592.500" rx="55" ry="29.500" transform="rotate(-2.500 919 592.500)"/></clipPath>
      </defs>
      <!-- foot plate -->
      <path d="M860 708L1045 602L1050 648L863 755Z" fill="#c87800" ${EDGE}/>
      <path d="M1045 602Q1055 596 1058 583L1062 630Q1061 641 1050 648Z" fill="url(#rnd)" ${EDGE}/>
      <path d="M845 512Q862 499 887 500Q900 500 912 506L1044 571Q1058 578 1058 585Q1056 596 1045 602L860 708Z" fill="#ffc400" ${EDGE}/>
      <ellipse cx="919" cy="592.500" rx="55" ry="29.500" transform="rotate(-2.500 919 592.500)" fill="url(#hC)" stroke="#4a4a48" stroke-width=".9"/>
      <g clip-path="url(#cC)"><ellipse cx="922" cy="639.500" rx="55" ry="29.500" transform="rotate(-2.500 922 639.500)" fill="#dcdfe1" stroke="#4a4a48" stroke-width=".9"/></g>
      <!-- back wall -->
      <path d="M647 424L803 497L825 778L674 707L664 578L659 575Z" fill="#a36200" ${EDGE}/>
      <path d="${holePath(693, 536.5)}" fill="url(#hB)" stroke="#4a4a48" stroke-width=".9"/>
      <g clip-path="url(#cB)"><path d="${holePath(732, 514.5)}" fill="#d4d7d9" stroke="#4a4a48" stroke-width=".9"/></g>
      <path d="M803 497L841 475L863 755L825 778Z" fill="#c87800" ${EDGE}/>
      <!-- inner wall -->
      <path d="M647 424L510 503L659 575Z" fill="#c87800" ${EDGE}/>
      <!-- front wall -->
      <path d="M432 507L625 600L647 881L453 788Z" fill="#a36200" ${EDGE}/>
      <path d="${holePath(516, 638)}" fill="url(#hA)" stroke="#4a4a48" stroke-width=".9"/>
      <g clip-path="url(#cA)"><path d="${holePath(555, 616)}" fill="#c87800" stroke="#4a4a48" stroke-width=".9"/></g>
      <path d="M625 600L664 578L687 858L647 881Z" fill="#c87800" ${EDGE}/>
      <!-- top L -->
      <path d="M647 383L841 475L803 497L647 424L510 503L664 578L625 600L432 507Z" fill="#ffc400" ${EDGE}/>
      <!-- triad -->
      <g>
        <path d="M45 909L63 898L82 908L81 925L64 936L46 925Z" fill="#d4d6d8" fill-opacity=".75" stroke="#b4b6b8" stroke-width=".8"/>
        <path d="M46 909L64 919L82 908M64 919V936" fill="none" stroke="#bcbec0" stroke-width=".8"/>
        <path d="M64 938L38 926" stroke="#2f8f2f" stroke-width="2.200"/><path d="M34 924l9 1-2 4Z" fill="#2f8f2f"/>
        <path d="M68 938L92 925" stroke="#c8342f" stroke-width="2.200"/><path d="M96 923l-9 1 2 4Z" fill="#d8403a"/>
        <path d="M64.500 938L62 908" stroke="#1030b8" stroke-width="2.200"/><path d="M61.500 905l-3 8h6Z" fill="#1030b8"/>
        <circle cx="65" cy="941" r="4" fill="#b8b8b8"/><circle cx="64" cy="940" r="2" fill="#eee"/>
        <text x="57" y="905" font-size="12" fill="#3a50e8">Z</text>
        <text x="26" y="930" font-size="12" fill="#2f9a4a">Y</text>
        <text x="96" y="926" font-size="12" fill="#d8504a">X</text>
      </g>
    </svg><slot></slot>`;
  }
}

class NxSpeed extends NxEl {
  html() {
    return `<style>
      :host{position:absolute;left:1396px;top:249px;display:flex;align-items:center;width:108px;height:48px;font:9.500px/14px "Liberation Sans",sans-serif;color:#222}
      .pill{position:absolute;left:42px;top:5px;box-sizing:border-box;width:65px;height:39px;border:1px solid #a8a8a8;border-left:0;border-radius:0 20px 20px 0;background:linear-gradient(#fafafa,#d4d4d4);box-shadow:0 1px 2px rgba(0,0,0,.25);display:flex;flex-direction:column;justify-content:center;padding:0 7px 0 10px}
      .r{display:flex;justify-content:space-between;align-items:center;height:15px}
      .ball{position:absolute;left:1px;top:0;box-sizing:border-box;width:48px;height:48px;border-radius:50%;border:3px solid #e8e8e8;outline:1px solid #a0a0a0;outline-offset:-1px;background:linear-gradient(#20795a 0,#1f8060 56%,#5fce70 56%,#5acb6c 100%);box-shadow:0 2px 4px rgba(0,0,0,.4);color:#fff;font:14px/41px "Liberation Sans",sans-serif;text-align:center;letter-spacing:.6px}
      .ball:before{content:"";position:absolute;left:12px;top:2px;width:18px;height:7px;border-radius:50%;background:rgba(255,255,255,.4);filter:blur(1px)}
    </style>
    <div class="pill">
      <div class="r"><svg width="7" height="8" viewBox="0 0 7 8"><path d="M3.500 0L7 4H4.500V8H2.500V4H0Z" fill="#e06a50"/></svg><span>99.3K/s</span></div>
      <div class="r"><svg width="7" height="8" viewBox="0 0 7 8"><path d="M3.500 8L7 4H4.500V0H2.500V4H0Z" fill="#3f9a5a"/></svg><span>0.7K/s</span></div>
    </div>
    <div class="ball">44%</div>`;
  }
}

class NxIme extends NxEl {
  html() {
    return `<style>
      :host{position:absolute;left:1330px;top:679px;width:123px;height:38px;display:flex;align-items:center}
      .s{position:absolute;left:2px;top:2px;width:32px;height:30px;border-radius:4px;transform:rotate(-7deg);background:linear-gradient(#ff7a30,#f04e0c);color:#fff;font:italic 900 30px/29px "Liberation Sans",sans-serif;text-align:center;z-index:1}
      .b{box-sizing:border-box;position:absolute;left:22px;top:4px;width:101px;height:30px;background:#fff;border:1px solid #b6c8d8;display:flex;align-items:center;padding-left:20px;gap:8px;color:#1f74c8;font:700 19px/28px ${FONT}}
      .b span{margin-top:3px}
    </style><div class="s">S</div><div class="b"><span>中</span>
      <svg width="19" height="19" viewBox="0 0 18 18"><path d="M12 1Q16 9 10 13Q6 15 1 13Q4 18 10 17Q17 15 17 8Q16 3 12 1Z" fill="#1f74c8"/></svg>
      <svg width="21" height="21" viewBox="0 0 21 21"><circle cx="10.500" cy="10.500" r="9" fill="#fff" stroke="#1f74c8" stroke-width="2"/><circle cx="7.500" cy="8" r="1.300" fill="#1f74c8"/><circle cx="13.500" cy="8" r="1.300" fill="#1f74c8"/><path d="M6 12.500q4.500 4 9 0" fill="none" stroke="#1f74c8" stroke-width="1.600"/></svg>
    </div>`;
  }
}

class NxWatermark extends NxEl {
  html() {
    return `<style>
      :host{position:absolute;left:1221px;top:711px;width:270px;height:84px;display:flex;align-items:flex-start;color:#f1f2f4}
      .t{margin:12px 0 0 7px;display:flex;flex-direction:column}
      .a{font:700 41px/44px "Liberation Sans","Noto Sans CJK SC",sans-serif;letter-spacing:.6px;white-space:nowrap}
      .w{font:700 14.500px/18px "Liberation Sans",sans-serif;letter-spacing:3.500px;white-space:nowrap;margin-top:-2px}
    </style>
    <svg width="74" height="84" viewBox="0 0 74 84" style="flex:none">
      <path d="M37 1L73 21L50 30Q45 18 37 20Z" fill="#c6e4f6"/>
      <path d="M73 21V62L50 52V30Z" fill="#8ed0f2"/>
      <path d="M73 62L37 83L24 60L50 52Z" fill="#72bfe8"/>
      <path d="M37 83L1 62L24 60L30 72Z" fill="#8ed0f2"/>
      <path d="M1 62V21L24 30V60Z" fill="#a4d8f4"/>
      <path d="M1 21L37 1L50 12L24 30Z" fill="#b8e0f6"/>
      <path d="M37 14L59 27V52L37 65L15 52V27Z" fill="none" stroke="#d8eaf4" stroke-width="2.500"/>
      <path d="M19 32L37 22L55 32L37 42Z" fill="#b4dcf4"/><path d="M19 32L37 42V63L19 52Z" fill="#9ad0f0"/><path d="M55 32L37 42V63L55 52Z" fill="#74c0e8"/>
    </svg>
    <div class="t"><span class="a">3D世界网</span><span class="w">WWW.3DSJW.COM</span></div>`;
  }
}

const defs = { "nx-titlebar": NxTitlebar, "nx-menubar": NxMenubar, "nx-ribbon": NxRibbon, "nx-group": NxGroup, "nx-clip-col": NxClipCol, "nx-big": NxBig, "nx-list": NxList, "nx-small": NxSmall, "nx-more": NxMore, "nx-icons": NxIcons, "nx-toolbar": NxToolbar, "nx-viewport": NxViewport, "nx-speed": NxSpeed, "nx-ime": NxIme, "nx-watermark": NxWatermark };
for (const k in defs) if (!customElements.get(k)) customElements.define(k, defs[k]);
</script>
</body>
</html>
